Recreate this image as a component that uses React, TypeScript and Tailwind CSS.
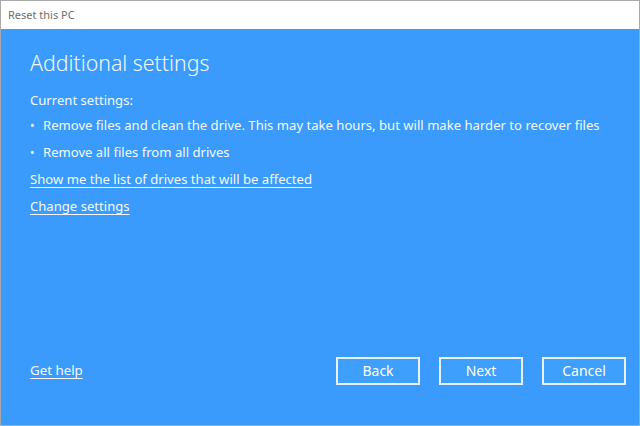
import React from 'react';

const font = { fontFamily: '"Noto Sans", "Open Sans", sans-serif' };

const Bullet = ({ children }: { children: React.ReactNode }) => (
  <div className="flex items-center h-[27px] whitespace-nowrap">
    <span className="w-[13px] text-[12px]">•</span>
    <span>{children}</span>
  </div>
);

const WizardButton = ({ label }: { label: string }) => (
  <button className="w-[84px] h-[28px] border-2 border-[#e6f2ff] bg-[#3f9ffc] text-white text-[14px] leading-none">
    {label}
  </button>
);

export default function App() {
  return (
    <div
      className="w-[640px] h-[426px] flex flex-col bg-white border border-[#a9a9a9] overflow-hidden"
      style={font}
    >
      {/* title bar */}
      <div className="h-[28px] shrink-0 flex items-center pl-[7px] text-[11px] text-[#6e6e6e]">
        Reset this PC
      </div>

      {/* content */}
      <div className="flex-1 flex flex-col bg-[#3a9bfc] text-[#f3f9ff] px-[29px]">
        <h1 className="mt-[23px] text-[21.3px] font-light leading-none">
          Additional settings
        </h1>

        <div className="mt-[15px] text-[13.1px] leading-none">
          <div className="h-[24px] flex items-center">Current settings:</div>
          <Bullet>Remove files and clean the drive. This may take hours, but will make harder to recover files</Bullet>
          <Bullet>Remove all files from all drives</Bullet>
          <div className="h-[27px] flex items-center">
            <a className="underline underline-offset-[3px] cursor-pointer">Show me the list of drives that will be affected</a>
          </div>
          <div className="h-[26px] flex items-center">
            <a className="underline underline-offset-[3px] cursor-pointer">Change settings</a>
          </div>
        </div>

        <div className="mt-auto mb-[40px] flex items-center">
          <a className="text-[13.3px] underline underline-offset-[3px] cursor-pointer">Get help</a>
          <div className="ml-auto flex gap-[19px] mr-[-16px]">
            <WizardButton label="Back" />
            <WizardButton label="Next" />
            <WizardButton label="Cancel" />
          </div>
        </div>
      </div>
    </div>
  );
}
